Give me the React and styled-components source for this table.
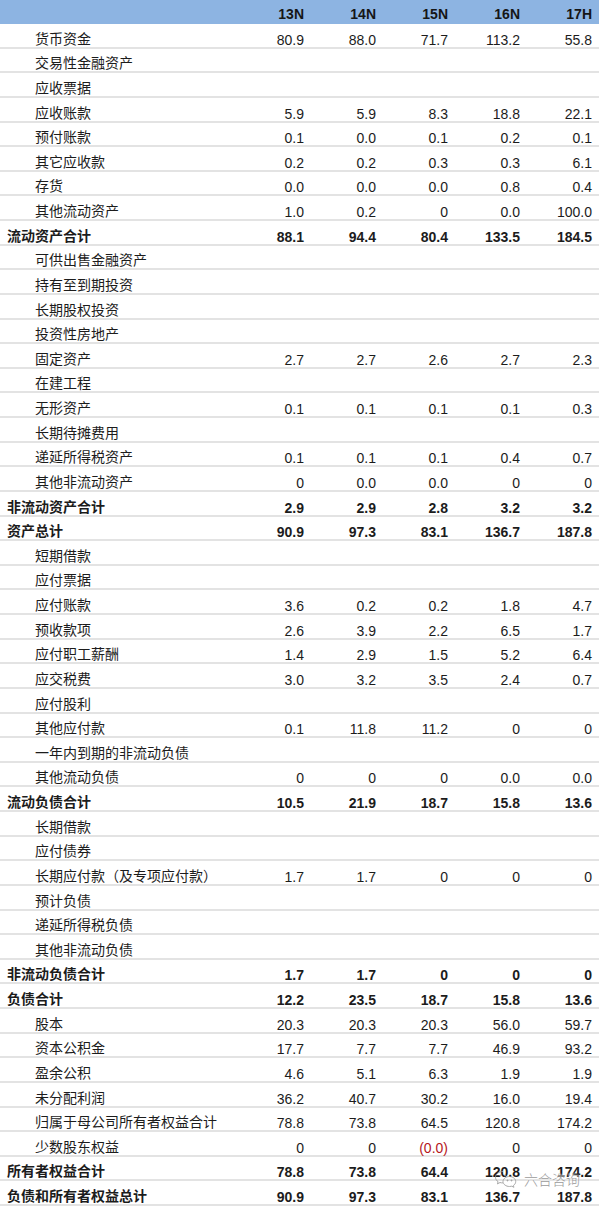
import React from "react";
import styled, { createGlobalStyle } from "styled-components";

const Global = createGlobalStyle`
  html, body { margin: 0; padding: 0; background: #ffffff; }
  body { font-family: "Liberation Sans", Arial, "Noto Sans CJK SC", sans-serif; }
`;

const COLS = ["13N", "14N", "15N", "16N", "17H"];

const ROWS = [
  ["货币资金", 0, ["80.9", "88.0", "71.7", "113.2", "55.8"]],
  ["交易性金融资产"],
  ["应收票据"],
  ["应收账款", 0, ["5.9", "5.9", "8.3", "18.8", "22.1"]],
  ["预付账款", 0, ["0.1", "0.0", "0.1", "0.2", "0.1"]],
  ["其它应收款", 0, ["0.2", "0.2", "0.3", "0.3", "6.1"]],
  ["存货", 0, ["0.0", "0.0", "0.0", "0.8", "0.4"]],
  ["其他流动资产", 0, ["1.0", "0.2", "0", "0.0", "100.0"]],
  ["流动资产合计", 1, ["88.1", "94.4", "80.4", "133.5", "184.5"]],
  ["可供出售金融资产"],
  ["持有至到期投资"],
  ["长期股权投资"],
  ["投资性房地产"],
  ["固定资产", 0, ["2.7", "2.7", "2.6", "2.7", "2.3"]],
  ["在建工程"],
  ["无形资产", 0, ["0.1", "0.1", "0.1", "0.1", "0.3"]],
  ["长期待摊费用"],
  ["递延所得税资产", 0, ["0.1", "0.1", "0.1", "0.4", "0.7"]],
  ["其他非流动资产", 0, ["0", "0.0", "0.0", "0", "0"]],
  ["非流动资产合计", 1, ["2.9", "2.9", "2.8", "3.2", "3.2"]],
  ["资产总计", 1, ["90.9", "97.3", "83.1", "136.7", "187.8"]],
  ["短期借款"],
  ["应付票据"],
  ["应付账款", 0, ["3.6", "0.2", "0.2", "1.8", "4.7"]],
  ["预收款项", 0, ["2.6", "3.9", "2.2", "6.5", "1.7"]],
  ["应付职工薪酬", 0, ["1.4", "2.9", "1.5", "5.2", "6.4"]],
  ["应交税费", 0, ["3.0", "3.2", "3.5", "2.4", "0.7"]],
  ["应付股利"],
  ["其他应付款", 0, ["0.1", "11.8", "11.2", "0", "0"]],
  ["一年内到期的非流动负债"],
  ["其他流动负债", 0, ["0", "0", "0", "0.0", "0.0"]],
  ["流动负债合计", 1, ["10.5", "21.9", "18.7", "15.8", "13.6"]],
  ["长期借款"],
  ["应付债券"],
  ["长期应付款（及专项应付款）", 0, ["1.7", "1.7", "0", "0", "0"]],
  ["预计负债"],
  ["递延所得税负债"],
  ["其他非流动负债"],
  ["非流动负债合计", 1, ["1.7", "1.7", "0", "0", "0"]],
  ["负债合计", 1, ["12.2", "23.5", "18.7", "15.8", "13.6"]],
  ["股本", 0, ["20.3", "20.3", "20.3", "56.0", "59.7"]],
  ["资本公积金", 0, ["17.7", "7.7", "7.7", "46.9", "93.2"]],
  ["盈余公积", 0, ["4.6", "5.1", "6.3", "1.9", "1.9"]],
  ["未分配利润", 0, ["36.2", "40.7", "30.2", "16.0", "19.4"]],
  ["归属于母公司所有者权益合计", 0, ["78.8", "73.8", "64.5", "120.8", "174.2"]],
  ["少数股东权益", 0, ["0", "0", "(0.0)", "0", "0"]],
  ["所有者权益合计", 1, ["78.8", "73.8", "64.4", "120.8", "174.2"]],
  ["负债和所有者权益总计", 1, ["90.9", "97.3", "83.1", "136.7", "187.8"]],
];

const Sheet = styled.div`
  position: relative;
  width: 599px;
  height: 1206px;
  overflow: hidden;
  background: #ffffff;
  color: #1c1c1c;
`;

const grid = `
  display: grid;
  grid-template-columns: 232px repeat(5, 72px);
  padding-right: 7px;
  box-sizing: border-box;
`;

const HeaderRow = styled.div`
  ${grid}
  height: 24px;
  background: #8db4e2;
  align-items: center;
  padding-top: 3px;
`;

const HeadCell = styled.div`
  text-align: right;
  font-weight: bold;
  font-size: 14px;
  line-height: 14px;
  color: #161616;
`;

const Row = styled.div`
  ${grid}
  height: 24.625px;
  border-bottom: 2px solid #e3e3e3;
  align-items: end;
  padding-bottom: 0;
`;

const Label = styled.div`
  padding-left: ${(p) => (p.$bold ? "7px" : "35px")};
  font-family: "Liberation Sans", "Noto Sans CJK SC", sans-serif;
  font-size: 14px;
  line-height: 15px;
  font-weight: ${(p) => (p.$bold ? "bold" : "normal")};
  white-space: nowrap;
  color: #1c1c1c;
`;

const Num = styled.div`
  text-align: right;
  font-size: 14px;
  line-height: 14px;
  font-weight: ${(p) => (p.$bold ? "bold" : "normal")};
  color: ${(p) => (p.$neg ? "#b5161c" : "#1c1c1c")};
`;

const Watermark = styled.div`
  position: absolute;
  left: 494px;
  top: 1170px;
  display: flex;
  align-items: center;
  gap: 6px;
  opacity: 0.85;
`;

const WaterText = styled.span`
  font-family: "Noto Sans CJK SC", sans-serif;
  font-size: 14px;
  line-height: 18px;
  color: #8a8a8a;
  font-weight: 300;
  text-shadow: 0 0 2px #ffffff, 0 0 2px #ffffff;
`;

function WeChatIcon() {
  return (
    <svg width="24" height="18" viewBox="0 0 24 18" fill="none" stroke="#9a9a9a" strokeWidth="1">
      <path d="M9 1.5c-4.2 0-7.5 2.6-7.5 5.8 0 1.8 1 3.4 2.6 4.4l-.7 2.2 2.6-1.4c.9.3 1.9.4 3 .4" />
      <path d="M15.5 6.5c-3.6 0-6.5 2.3-6.5 5s2.9 5 6.5 5c.8 0 1.6-.1 2.3-.3l2.1 1.1-.5-1.8c1.4-.9 2.3-2.3 2.3-4 0-2.7-2.9-5-6.2-5z" />
      <circle cx="6.5" cy="5.5" r=".6" fill="#9a9a9a" />
      <circle cx="11" cy="5.5" r=".6" fill="#9a9a9a" />
      <circle cx="13.5" cy="10.5" r=".5" fill="#9a9a9a" />
      <circle cx="17.5" cy="10.5" r=".5" fill="#9a9a9a" />
    </svg>
  );
}

export default function App() {
  return (
    <Sheet>
      <Global />
      <HeaderRow>
        <div />
        {COLS.map((c) => (
          <HeadCell key={c}>{c}</HeadCell>
        ))}
      </HeaderRow>
      {ROWS.map(([label, bold, vals], i) => (
        <Row key={i}>
          <Label $bold={!!bold}>{label}</Label>
          {[0, 1, 2, 3, 4].map((j) => {
            const v = vals ? vals[j] : "";
            return (
              <Num key={j} $bold={!!bold} $neg={v && v.startsWith("(")}>
                {v}
              </Num>
            );
          })}
        </Row>
      ))}
      <Watermark>
        <WeChatIcon />
        <WaterText>六合咨询</WaterText>
      </Watermark>
    </Sheet>
  );
}
